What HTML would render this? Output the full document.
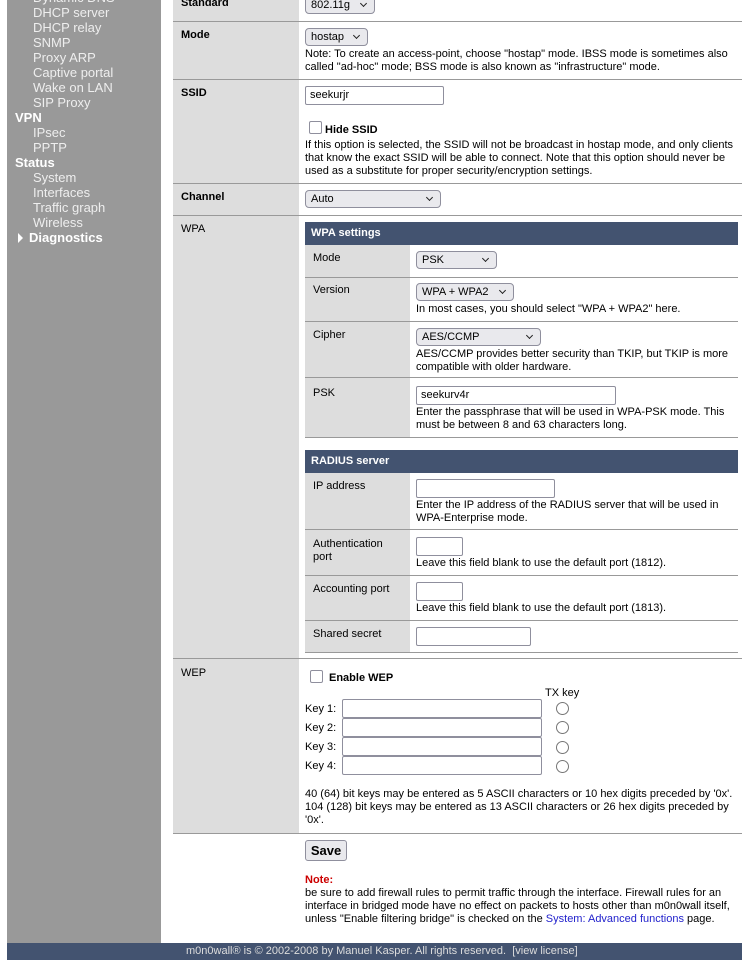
<!DOCTYPE html>
<html><head><meta charset="utf-8">
<style>
*{box-sizing:border-box;margin:0;padding:0}
body{width:742px;height:967px;position:relative;background:#fff;font-family:"Liberation Sans",Arial,sans-serif;font-size:11px;color:#000;overflow:hidden}
.a{position:absolute}
.sb{left:7px;top:0;width:154px;height:943px;background:#999}
.si{position:absolute;left:33px;font-size:13px;color:#eee;line-height:15px;white-space:nowrap}
.sh{position:absolute;left:15px;font-size:13px;color:#fff;font-weight:bold;line-height:15px}
.lab{position:absolute;left:173px;width:126px;background:#ddd}
.ln{position:absolute;height:1px;background:#999}
.t{position:absolute;line-height:13px;white-space:nowrap;padding-top:1px}
.b{font-weight:bold}
.sel{position:absolute;height:18px;border:1px solid #8f8f9d;border-radius:4px;background:#e9e9ed;font-size:11px;line-height:16px;padding-left:5px}
.sel:after{content:"";position:absolute;right:8px;top:4px;width:4px;height:4px;border-right:1.5px solid #222;border-bottom:1.5px solid #222;transform:rotate(45deg)}
.inp{position:absolute;height:19px;border:1px solid #8f8f9d;border-radius:2px;background:#fff;font-size:11px;line-height:17px;padding-left:4px}
.cb{position:absolute;width:13px;height:13px;border:1px solid #8f8f9d;border-radius:2px;background:#fff}
.rd{position:absolute;width:13px;height:13px;border:1.5px solid #767676;border-radius:50%;background:#fff}
.hd{position:absolute;left:305px;width:433px;height:23px;background:#435370;color:#fff;font-weight:bold;line-height:23px;padding-left:6px}
.il{position:absolute;left:305px;width:105px;background:#ddd}
</style></head><body>
<div class="a sb"></div>
<div class="si" style="top:-10px">Dynamic DNS</div>
<div class="si" style="top:5px">DHCP server</div>
<div class="si" style="top:20px">DHCP relay</div>
<div class="si" style="top:35px">SNMP</div>
<div class="si" style="top:50px">Proxy ARP</div>
<div class="si" style="top:65px">Captive portal</div>
<div class="si" style="top:80px">Wake on LAN</div>
<div class="si" style="top:95px">SIP Proxy</div>
<div class="sh" style="top:110px">VPN</div>
<div class="si" style="top:125px">IPsec</div>
<div class="si" style="top:140px">PPTP</div>
<div class="sh" style="top:155px">Status</div>
<div class="si" style="top:170px">System</div>
<div class="si" style="top:185px">Interfaces</div>
<div class="si" style="top:200px">Traffic graph</div>
<div class="si" style="top:215px">Wireless</div>
<div class="sh" style="top:230px;left:29px">Diagnostics</div>
<div class="a" style="left:18px;top:233px;width:0;height:0;border-left:5px solid #fff;border-top:5px solid transparent;border-bottom:5px solid transparent"></div>

<div class="lab" style="top:0;height:833px"></div>
<div class="ln" style="left:173px;width:569px;top:21px"></div>
<div class="ln" style="left:173px;width:569px;top:79px"></div>
<div class="ln" style="left:173px;width:569px;top:183px"></div>
<div class="ln" style="left:173px;width:569px;top:215px"></div>
<div class="ln" style="left:173px;width:569px;top:658px"></div>
<div class="ln" style="left:173px;width:569px;top:833px"></div>

<div class="t b" style="left:181px;top:-4px">Standard</div>
<div class="sel" style="left:305px;top:-4px;width:70px">802.11g</div>

<div class="t b" style="left:181px;top:28px">Mode</div>
<div class="sel" style="left:305px;top:28px;width:63px">hostap</div>
<div class="t" style="left:305px;top:47px">Note: To create an access-point, choose "hostap" mode. IBSS mode is sometimes also<br>called "ad-hoc" mode; BSS mode is also known as "infrastructure" mode.</div>

<div class="t b" style="left:181px;top:86px">SSID</div>
<div class="inp" style="left:305px;top:86px;width:139px">seekurjr</div>
<div class="cb" style="left:309px;top:121px"></div>
<div class="t b" style="left:325px;top:123px">Hide SSID</div>
<div class="t" style="left:305px;top:138px">If this option is selected, the SSID will not be broadcast in hostap mode, and only clients<br>that know the exact SSID will be able to connect. Note that this option should never be<br>used as a substitute for proper security/encryption settings.</div>

<div class="t b" style="left:181px;top:190px">Channel</div>
<div class="sel" style="left:305px;top:190px;width:136px">Auto</div>

<div class="t" style="left:181px;top:222px">WPA</div>
<div class="hd" style="top:222px">WPA settings</div>
<div class="il" style="top:245px;height:193px"></div>
<div class="ln" style="left:305px;width:433px;top:277px"></div>
<div class="ln" style="left:305px;width:433px;top:321px"></div>
<div class="ln" style="left:305px;width:433px;top:377px"></div>
<div class="ln" style="left:305px;width:433px;top:437px"></div>
<div class="t" style="left:313px;top:251px">Mode</div>
<div class="sel" style="left:416px;top:251px;width:81px">PSK</div>
<div class="t" style="left:313px;top:283px">Version</div>
<div class="sel" style="left:416px;top:283px;width:98px">WPA + WPA2</div>
<div class="t" style="left:416px;top:302px">In most cases, you should select "WPA + WPA2" here.</div>
<div class="t" style="left:313px;top:328px">Cipher</div>
<div class="sel" style="left:416px;top:328px;width:125px">AES/CCMP</div>
<div class="t" style="left:416px;top:347px">AES/CCMP provides better security than TKIP, but TKIP is more<br>compatible with older hardware.</div>
<div class="t" style="left:313px;top:386px">PSK</div>
<div class="inp" style="left:416px;top:386px;width:200px">seekurv4r</div>
<div class="t" style="left:416px;top:405px">Enter the passphrase that will be used in WPA-PSK mode. This<br>must be between 8 and 63 characters long.</div>

<div class="hd" style="top:450px">RADIUS server</div>
<div class="il" style="top:473px;height:180px"></div>
<div class="ln" style="left:305px;width:433px;top:529px"></div>
<div class="ln" style="left:305px;width:433px;top:575px"></div>
<div class="ln" style="left:305px;width:433px;top:620px"></div>
<div class="ln" style="left:305px;width:433px;top:652px"></div>
<div class="t" style="left:313px;top:479px">IP address</div>
<div class="inp" style="left:416px;top:479px;width:139px"></div>
<div class="t" style="left:416px;top:498px">Enter the IP address of the RADIUS server that will be used in<br>WPA-Enterprise mode.</div>
<div class="t" style="left:313px;top:537px">Authentication<br>port</div>
<div class="inp" style="left:416px;top:537px;width:47px"></div>
<div class="t" style="left:416px;top:556px">Leave this field blank to use the default port (1812).</div>
<div class="t" style="left:313px;top:582px">Accounting port</div>
<div class="inp" style="left:416px;top:582px;width:47px"></div>
<div class="t" style="left:416px;top:601px">Leave this field blank to use the default port (1813).</div>
<div class="t" style="left:313px;top:627px">Shared secret</div>
<div class="inp" style="left:416px;top:627px;width:115px"></div>

<div class="t" style="left:181px;top:666px">WEP</div>
<div class="cb" style="left:310px;top:670px"></div>
<div class="t b" style="left:329px;top:671px">Enable WEP</div>
<div class="t" style="left:545px;top:686px">TX key</div>
<div class="t" style="left:305px;top:702px">Key 1:</div>
<div class="t" style="left:305px;top:721px">Key 2:</div>
<div class="t" style="left:305px;top:740px">Key 3:</div>
<div class="t" style="left:305px;top:759px">Key 4:</div>
<div class="inp" style="left:342px;top:699px;width:200px"></div>
<div class="inp" style="left:342px;top:718px;width:200px"></div>
<div class="inp" style="left:342px;top:737px;width:200px"></div>
<div class="inp" style="left:342px;top:756px;width:200px"></div>
<div class="rd" style="left:556px;top:702px"></div>
<div class="rd" style="left:556px;top:721px"></div>
<div class="rd" style="left:556px;top:741px"></div>
<div class="rd" style="left:556px;top:760px"></div>
<div class="t" style="left:305px;top:787px">40 (64) bit keys may be entered as 5 ASCII characters or 10 hex digits preceded by '0x'.<br>104 (128) bit keys may be entered as 13 ASCII characters or 26 hex digits preceded by<br>'0x'.</div>

<div class="a" style="left:305px;top:840px;width:42px;height:21px;border:1px solid #8f8f9d;border-radius:3px;background:#e9e9ed;font-weight:bold;font-size:13px;line-height:19px;text-align:center">Save</div>
<div class="t b" style="left:305px;top:873px;color:#c00">Note:</div>
<div class="t" style="left:305px;top:886px">be sure to add firewall rules to permit traffic through the interface. Firewall rules for an<br>interface in bridged mode have no effect on packets to hosts other than m0n0wall itself,<br>unless "Enable filtering bridge" is checked on the <span style="color:#22c">System: Advanced functions</span> page.</div>

<div class="a" style="left:7px;top:943px;width:735px;height:17px;background:#435370"></div>
<div class="t" style="left:186px;top:944px;color:#ddd">m0n0wall® is © 2002-2008 by Manuel Kasper. All rights reserved.&nbsp; [view license]</div>
</body></html>
